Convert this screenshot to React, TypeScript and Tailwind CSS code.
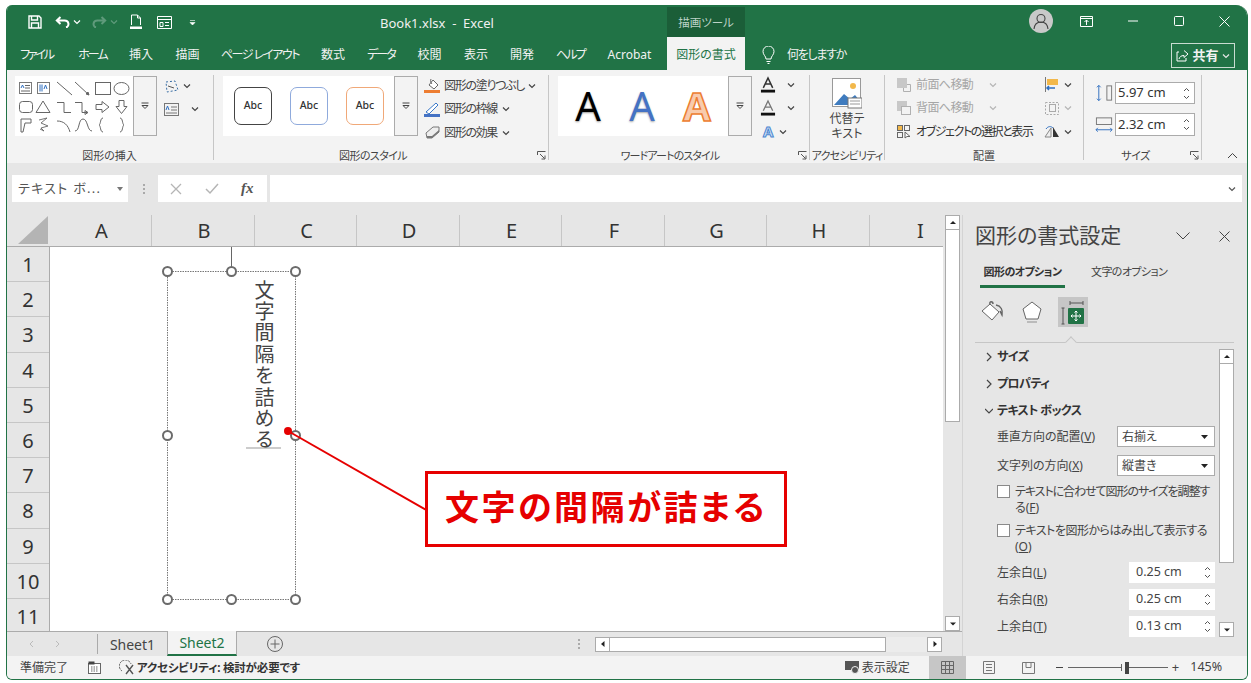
import type { ReactNode } from "react";

const TABS = [
  { label: "ファイル", w: "w-[59px] tracking-[-2.2px]" },
  { label: "ホーム", w: "w-[53px] tracking-[-2px]" },
  { label: "挿入", w: "w-[44px]" },
  { label: "描画", w: "w-[49px]" },
  { label: "ページ レイアウト", w: "w-[96px] tracking-[-1.4px]" },
  { label: "数式", w: "w-[50px]" },
  { label: "データ", w: "w-[46px] tracking-[-2px]" },
  { label: "校閲", w: "w-[51px]" },
  { label: "表示", w: "w-[42px]" },
  { label: "開発", w: "w-[50px]" },
  { label: "ヘルプ", w: "w-[47px] tracking-[-1.700px]" },
  { label: "Acrobat", w: "w-[71px]" },
];

const COLUMNS = [
  { label: "A", w: "w-[102px]" },
  { label: "B", w: "w-[103px]" },
  { label: "C", w: "w-[102px]" },
  { label: "D", w: "w-[103px]" },
  { label: "E", w: "w-[102px]" },
  { label: "F", w: "w-[103px]" },
  { label: "G", w: "w-[102px]" },
  { label: "H", w: "w-[103px]" },
  { label: "I", w: "w-[100px]" },
];

const ROWS = ["1", "2", "3", "4", "5", "6", "7", "8", "9", "10", "11"];

function Chevron({ className = "text-[#444]" }: { className?: string }) {
  return (
    <svg width="8" height="6" viewBox="0 0 8 6" className={`shrink-0 ${className}`}>
      <path d="M1 1.500 4 4.500 7 1.500" fill="none" stroke="currentColor" strokeWidth="1.200" />
    </svg>
  );
}

function GalleryButton({ className }: { className: string }) {
  return (
    <div className={`flex items-center justify-center border border-[#ababab] bg-[#f3f3f3] ${className}`}>
      <svg width="10" height="8" viewBox="0 0 10 8">
        <path d="M1.500 1h7" stroke="#444" />
        <path d="M2 3.500h6L5 6.500z" fill="none" stroke="#444" />
      </svg>
    </div>
  );
}

function Launcher() {
  return (
    <svg width="9" height="9" viewBox="0 0 9 9" className="absolute right-[2px] top-[4px]">
      <path d="M.5 4V.5H8.500M3 3l4.500 4.500M4.500 8h3.500V4.500" fill="none" stroke="#555" />
    </svg>
  );
}

function Group({
  label,
  width,
  labelClass = "",
  launcher,
  children,
}: {
  label: string;
  width: string;
  labelClass?: string;
  launcher?: boolean;
  children: ReactNode;
}) {
  return (
    <div className={`flex h-[85px] shrink-0 flex-col border-r border-[#c6c6c6] ${width}`}>
      <div className="flex h-[72px]">{children}</div>
      <div className={`relative h-[13px] whitespace-nowrap text-center text-[11px] leading-[17px] text-[#444] ${labelClass}`}>
        {label}
        {launcher && <Launcher />}
      </div>
    </div>
  );
}

function ShapeGallery() {
  return (
    <svg width="118" height="60" viewBox="0 0 118 60" className="bg-white">
      <g fill="none" stroke="#666" strokeWidth="1">
        <rect x="4.500" y="6.500" width="12" height="11" stroke="#7a7a7a" />
        <path d="M10 9.500h5M10 12h5M6 15h9" />
        <path d="M6 12l1.500-3L9 12" stroke="#2f6fc0" />
        <rect x="22.500" y="6.500" width="12" height="11" stroke="#7a7a7a" />
        <path d="M25 8.500v7M27 8.500v7M29 13l1.500-4 1.500 4" stroke="#2f6fc0" />
        <path d="M42 6 57 19M60 6l14 13" />
        <path d="M74 19l-3-1 2-2z" fill="#666" />
        <rect x="80.500" y="6.500" width="15" height="12" />
        <ellipse cx="106.500" cy="12.500" rx="7.500" ry="6" />
        <rect x="4.500" y="25.500" width="13" height="11" rx="3" />
        <path d="M28 25l7 11.500H21z" />
        <path d="M42 26.500h7v10h7M60 26.500h7v10h6M73 36.500l-3-2v4z" />
        <path d="M81 28.500h6v-3l7 5.500-7 5.500v-3h-6zM104 24.500h5v6h3l-5.500 7-5.500-7h3z" />
        <path d="M6 56V43h10v4h-6l-2 9z" />
        <path d="M24 44l8-2-6 5 7 3-7 2 3 3-4-2" strokeWidth=".9" />
        <path d="M42 45c7 0 11 4 13 11M60 55c5 0 3-12 8-12s4 12 9 12" />
        <path d="M88 42c-3 0-2 6-4 7 2 1 1 7 4 7" />
        <path d="M105 42c3 0 2 6 4 7-2 1-1 7-4 7" />
      </g>
    </svg>
  );
}

function AbcCard({ border }: { border: string }) {
  return (
    <div className={`flex size-[38px] items-center justify-center rounded-[7px] bg-white text-[10.500px] font-medium text-[#333] ${border}`}>
      Abc
    </div>
  );
}

function CommandRow({ icon, label, chevronGap }: { icon: ReactNode; label: string; chevronGap: string }) {
  return (
    <div className="flex h-[23.500px] items-center text-[12px] tracking-[-1.300px] text-[#444]">
      <span className="shrink-0">{icon}</span>
      <span className="ml-[3px] whitespace-nowrap">{label}</span>
      <Chevron className={`text-[#444] ${chevronGap}`} />
    </div>
  );
}

function FontColorIcon({ stroke }: { stroke?: boolean }) {
  return (
    <div className="flex h-[23.500px] w-[42px] items-center pl-[7px]">
      <svg width="17" height="18" viewBox="0 0 17 18">
        {stroke ? (
          <path d="M3.500 12 8.500 1.500l5 10.500M5.500 8h6" fill="none" stroke="#777" strokeWidth="1.400" />
        ) : (
          <path d="M3.500 12 8.500 1.500l5 10.500M5.500 8h6" fill="none" stroke="#333" strokeWidth="1.600" />
        )}
        <rect x="1" y="14" width="15" height="3" fill="#111" />
      </svg>
      <Chevron className="ml-[11px] text-[#444]" />
    </div>
  );
}

function Spinner({ value, className }: { value: string; className: string }) {
  return (
    <div className={`flex items-center justify-between bg-white pl-[2px] pr-[4px] ${className}`}>
      <span>{value}</span>
      <svg width="7" height="13" viewBox="0 0 7 13">
        <path d="M1 4 3.500 1.500 6 4M1 9l2.500 2.500L6 9" fill="none" stroke="#555" />
      </svg>
    </div>
  );
}

function ScrollButton({ dir, className = "" }: { dir: "up" | "down" | "left" | "right"; className?: string }) {
  const d = {
    up: "M1 5h6L4 2z",
    down: "M1 2.500h6L4 5.500z",
    left: "M5.500 1v6L2 4z",
    right: "M2.500 1v6L6 4z",
  }[dir];
  return (
    <div className={`flex size-[15px] shrink-0 items-center justify-center border border-[#ababab] bg-white ${className}`}>
      <svg width="8" height="8" viewBox="0 0 8 8">
        <path d={d} fill="#222" />
      </svg>
    </div>
  );
}

function TitleBar() {
  return (
    <div className="flex h-[32px] shrink-0 bg-[#217346] text-white">
      <div className="flex w-[373px] items-center pl-[21px] pt-[2px]">
        <svg width="14" height="14" viewBox="0 0 14 14" fill="none" stroke="#fff" strokeWidth="1.400">
          <path d="M1 1h10l2 2v10H1zM3.500 1v4h6V1M3.500 13V8h7v5" />
        </svg>
        <svg width="16" height="12" viewBox="0 0 16 12" fill="none" stroke="#fff" strokeWidth="2" className="ml-[13px]">
          <path d="M5.500 1 1.800 4.500 5.500 8M2 4.500h7.500c5 0 5 6 1.500 7" />
        </svg>
        <Chevron className="ml-[2px] text-white" />
        <svg width="16" height="12" viewBox="0 0 16 12" fill="none" stroke="#5f9a7b" strokeWidth="2" className="ml-[10px]">
          <path d="M10.500 1l3.700 3.500L10.500 8M14 4.500H6.500c-5 0-5 6-1.500 7" />
        </svg>
        <Chevron className="ml-[3px] text-[#5f9a7b]" />
        <svg width="14" height="16" viewBox="0 0 14 16" fill="none" stroke="#fff" className="ml-[11px]">
          <path d="M2.500 11V1h6l3 3v7M8.500 1v3h3" />
          <path d="M1 12.500h12v2.500H1z" fill="#fff" stroke="none" />
        </svg>
        <svg width="15" height="13" viewBox="0 0 15 13" fill="none" stroke="#fff" className="ml-[14px]">
          <path d="M.5.5h14v12H.5zM.5 3.500h14M3 6.500h3v4H3zM8 6.500h4M8 9.500h4" />
        </svg>
        <svg width="7" height="7" viewBox="0 0 7 7" className="ml-[17px]">
          <path d="M1 1.500h5M1 3.500h5L3.500 6z" fill="#fff" stroke="#fff" strokeWidth=".6" />
        </svg>
      </div>
      <div className="flex w-[287px] items-center pt-[6px] text-[13px] text-[#f0f0f0]">Book1.xlsx&nbsp; -&nbsp; Excel</div>
      <div className="mt-[2px] flex w-[78px] items-center justify-center pt-[2px] bg-[#1b5e38] text-[11.500px] text-[#bdd3c7]">
        描画ツール
      </div>
      <div className="flex flex-1 items-center">
        <div className="ml-[284px] flex size-[24px] items-center justify-center rounded-full bg-[#c9c9c9]">
          <svg width="16" height="17" viewBox="0 0 16 17" fill="none" stroke="#444" strokeWidth="1.100">
            <circle cx="8" cy="5.500" r="4" />
            <path d="M1 16c.5-5 3.500-7 7-7s6.500 2 7 7" />
          </svg>
        </div>
        <svg width="13" height="11" viewBox="0 0 13 11" fill="none" stroke="#fff" className="ml-[27px]">
          <path d="M.5.5h12v10H.5zM.5 2.500h12M6.500 9V4M4.500 6l2-2 2 2" />
        </svg>
        <svg width="12" height="2" viewBox="0 0 12 2" className="ml-[34px]">
          <path d="M1 1h10" stroke="#fff" />
        </svg>
        <svg width="10" height="10" viewBox="0 0 10 10" fill="none" stroke="#fff" className="ml-[35px]">
          <rect x=".5" y=".5" width="9" height="9" rx="1" />
        </svg>
        <svg width="11" height="11" viewBox="0 0 11 11" fill="none" stroke="#fff" className="ml-[35px]">
          <path d="M.5.5l10 10M10.500.5l-10 10" />
        </svg>
      </div>
    </div>
  );
}

function TabRow() {
  return (
    <div className="flex h-[33px] shrink-0 bg-[#217346] text-[12px] text-[#f2f2f2]">
      {TABS.map((t) => (
        <div key={t.label} className={`flex items-center justify-center whitespace-nowrap pt-[3px] ${t.w}`}>
          {t.label}
        </div>
      ))}
      <div className="ml-[2px] flex w-[78px] items-center justify-center bg-[#f3f3f3] pt-[3px] text-[#217346]">図形の書式</div>
      <svg width="13" height="18" viewBox="0 0 13 18" fill="none" stroke="#fff" className="ml-[17px] mt-[3px] self-center">
        <path d="M4 13c0-3-3-4-3-7.500a5.500 5.500 0 0 1 11 0C12 9 9 10 9 13zM4.500 15.500h4M5.500 17.500h2" />
      </svg>
      <div className="ml-[12px] flex w-[58px] items-center whitespace-nowrap pt-[3px] tracking-[-1.300px]">何をしますか</div>
      <div className="ml-[326px] mt-[6px] flex h-[25px] w-[64px] items-center justify-center gap-[3px] border border-[#c9dcd1] font-bold">
        <svg width="13" height="13" viewBox="0 0 13 13" fill="none" stroke="#fff">
          <path d="M8 1.500 12 5l-4 3.500V6.500C5 6.500 3.500 8 3 10M3 3H1v9h9V9" />
        </svg>
        <span className="text-[13px]">共有</span>
        <Chevron className="text-[#e6e6e6]" />
      </div>
    </div>
  );
}

function Ribbon() {
  return (
    <div className="flex h-[93px] shrink-0 bg-[#f3f3f3] pt-[5px]">
      <Group label="図形の挿入" width="w-[207px]" labelClass="text-[11.500px] pr-[1px]">
        <div className="ml-[8px] mt-[1px] flex h-[60px] w-[142px]">
          <ShapeGallery />
          <GalleryButton className="w-[24px]" />
        </div>
        <div className="ml-[7px] flex flex-col">
          <div className="flex h-[22px] items-center">
            <svg width="15" height="13" viewBox="0 0 15 13" fill="none">
              <path d="M2 2 11 1l3 9-11 2z" stroke="#3a6ea5" strokeDasharray="2 2" />
              <path d="M4 6l6 2" stroke="#555" />
            </svg>
            <Chevron className="ml-[4px] text-[#444]" />
          </div>
          <div className="mt-[1px] flex h-[22px] items-center">
            <svg width="15" height="13" viewBox="0 0 15 13" fill="none" stroke="#777">
              <rect x=".5" y=".5" width="14" height="12" />
              <path d="M7 4h6M7 7h6M2 10h11" />
              <path d="M2 7l1.500-4L5 7" stroke="#2f6fc0" />
            </svg>
            <Chevron className="ml-[12px] text-[#444]" />
          </div>
        </div>
      </Group>

      <Group label="図形のスタイル" width="w-[335px]" labelClass="tracking-[-.6px] pr-[16px]" launcher>
        <div className="ml-[9px] mt-[1px] flex h-[60px] w-[195px]">
          <div className="flex w-[171px] items-center gap-[18px] bg-white pl-[11px]">
            <AbcCard border="border-[1.500px] border-[#444]" />
            <AbcCard border="border-[1.500px] border-[#8faadc]" />
            <AbcCard border="border-[1.500px] border-[#f0a878]" />
          </div>
          <GalleryButton className="w-[24px]" />
        </div>
        <div className="-mt-[1px] ml-[6px] flex flex-col">
          <CommandRow
            chevronGap="ml-[4px]"
            label="図形の塗りつぶし"
            icon={
              <svg width="17" height="17" viewBox="0 0 17 17" fill="none">
                <path d="M5 8l4-5 5 5-4 4z" stroke="#666" fill="#fff" />
                <path d="M7 2c-1 2 0 4 1 5" stroke="#666" />
                <rect x="0" y="13" width="16" height="3" fill="#ed7d31" />
              </svg>
            }
          />
          <CommandRow
            chevronGap="ml-[5px]"
            label="図形の枠線"
            icon={
              <svg width="17" height="17" viewBox="0 0 17 17" fill="none">
                <path d="M2 11 12 2l2 2-9 9z" fill="#fff" stroke="#3a78c8" />
                <rect x="0" y="13" width="16" height="3" fill="#4472c4" />
              </svg>
            }
          />
          <CommandRow
            chevronGap="ml-[5px]"
            label="図形の効果"
            icon={
              <svg width="17" height="17" viewBox="0 0 17 17">
                <path d="M2 9 9 3h6v5l-7 6H3z" fill="#eee" stroke="#777" />
                <path d="M3 14h5l7-6v-2l-7 6H3z" fill="#777" />
              </svg>
            }
          />
        </div>
      </Group>

      <Group label="ワードアートのスタイル" width="w-[261px]" labelClass="tracking-[-.9px] pr-[18px]" launcher>
        <div className="ml-[9px] mt-[1px] flex h-[60px] w-[194px]">
          <div className="flex w-[170px] items-center justify-around bg-white px-[3px] text-[40px] leading-none">
            <span className="text-black [text-shadow:0_1px_2px_#999]">A</span>
            <span className="text-[#4472c4] [text-shadow:0_1px_2px_#aaa]">A</span>
            <span className="font-bold text-[#f8cbad] [-webkit-text-stroke:1.500px_#ed7d31]">A</span>
          </div>
          <GalleryButton className="w-[24px]" />
        </div>
        <div className="-mt-[2px] ml-[1px] flex flex-col">
          <FontColorIcon />
          <FontColorIcon stroke />
          <div className="flex h-[23.500px] items-center pl-[10px]">
            <span className="text-[15px] font-bold leading-none text-[#cfe0f5] [-webkit-text-stroke:1px_#4a86d0]">A</span>
            <Chevron className="ml-[6px] text-[#444]" />
          </div>
        </div>
      </Group>

      <Group label="アクセシビリティ" width="w-[75px]" labelClass="tracking-[-.8px]">
        <div className="flex w-full flex-col items-center pt-[3px] text-[12px] leading-[15px] text-[#444]">
          <svg width="30" height="31" viewBox="0 0 30 31">
            <rect x=".5" y=".5" width="28" height="28" fill="#fff" stroke="#999" />
            <circle cx="21" cy="8" r="3" fill="#f2b84b" />
            <path d="M2 27l10-11 6 5 5-4 5 6v4H2z" fill="#3f7cbf" />
            <rect x="16" y="20" width="14" height="10" fill="#fff" stroke="#777" />
            <path d="M18 23h10M18 26h10" stroke="#999" />
          </svg>
          <div className="mt-[2px] text-center">
            代替テ
            <br />
            キスト
          </div>
        </div>
      </Group>

      <Group label="配置" width="w-[199px]">
        <div className="-mt-[2px] flex w-[150px] flex-col pl-[12px] text-[12px]">
          <div className="flex h-[23.500px] items-center text-[#a6a6a6]">
            <svg width="14" height="14" viewBox="0 0 14 14" className="shrink-0">
              <rect x="0" y="0" width="10" height="10" fill="#c8c8c8" />
              <path d="M10 6.500h3.500v7h-7V10" fill="none" stroke="#b0b0b0" />
            </svg>
            <span className="ml-[5px] tracking-[-.6px]">前面へ移動</span>
            <Chevron className="ml-[16px] text-[#b5b5b5]" />
          </div>
          <div className="flex h-[23.500px] items-center text-[#a6a6a6]">
            <svg width="14" height="14" viewBox="0 0 14 14" className="shrink-0">
              <rect x="0" y="0" width="10" height="10" fill="#c8c8c8" />
              <rect x="4.500" y="5.500" width="9" height="8" fill="#f3f3f3" stroke="#b0b0b0" />
            </svg>
            <span className="ml-[5px] tracking-[-.6px]">背面へ移動</span>
            <Chevron className="ml-[16px] text-[#b5b5b5]" />
          </div>
          <div className="flex h-[23.500px] items-center whitespace-nowrap text-[#333]">
            <svg width="14" height="14" viewBox="0 0 14 14" fill="none" stroke="#666" className="shrink-0">
              <rect x=".5" y=".5" width="5" height="5" fill="#f2b84b" />
              <rect x="7.500" y=".5" width="5" height="5" />
              <rect x=".5" y="7.500" width="5" height="5" />
              <path d="M8 7v6l2-1.500h3z" fill="#fff" />
            </svg>
            <span className="ml-[5px] tracking-[-1.400px]">オブジェクトの選択と表示</span>
          </div>
        </div>
        <div className="-mt-[2px] ml-[9px] flex flex-col">
          <div className="flex h-[23.500px] items-center">
            <svg width="16" height="15" viewBox="0 0 16 15">
              <path d="M1.500 0v15" stroke="#777" />
              <rect x="3" y="2" width="11" height="6" fill="#f2b84b" />
              <path d="M3 11h8M5 9l-2 2 2 2" fill="none" stroke="#2f6fc0" strokeWidth="1.500" />
            </svg>
            <Chevron className="ml-[4px] text-[#444]" />
          </div>
          <div className="flex h-[23.500px] items-center">
            <svg width="16" height="15" viewBox="0 0 16 15" fill="none" stroke="#aaa">
              <rect x="1.500" y="1.500" width="13" height="12" strokeDasharray="2 1.500" />
              <rect x="5.500" y="3.500" width="6" height="7" />
            </svg>
            <Chevron className="ml-[4px] text-[#b5b5b5]" />
          </div>
          <div className="flex h-[23.500px] items-center">
            <svg width="16" height="15" viewBox="0 0 16 15">
              <path d="M1 13 7 4v9z" fill="#eee" stroke="#888" />
              <path d="M9 13V3l6 10z" fill="#333" />
              <path d="M2 5c2-3 5-3 7-1" fill="none" stroke="#2f6fc0" />
            </svg>
            <Chevron className="ml-[4px] text-[#444]" />
          </div>
        </div>
      </Group>

      <Group label="サイズ" width="w-[118px]" labelClass="pr-[14px] tracking-[-.4px]" launcher>
        <div className="flex flex-col pl-[11px] pt-[7px] text-[13px] text-[#333]">
          <div className="flex items-center">
            <svg width="19" height="18" viewBox="0 0 20 18" fill="none">
              <path d="M4 1v16M2 3l2-2 2 2M2 15l2 2 2-2" stroke="#2f6fc0" />
              <rect x="12.500" y="1.500" width="5" height="15" stroke="#777" />
            </svg>
            <Spinner value="5.97 cm" className="ml-px h-[22px] w-[80px] border border-[#ababab]" />
          </div>
          <div className="mt-[9px] flex items-center">
            <svg width="19" height="18" viewBox="0 0 20 18" fill="none">
              <rect x="1.500" y="1.500" width="16" height="7" stroke="#777" />
              <path d="M1 14h17M3 12l-2 2 2 2M16 12l2 2-2 2" stroke="#2f6fc0" />
            </svg>
            <Spinner value="2.32 cm" className="ml-px h-[23px] w-[80px] border border-[#ababab]" />
          </div>
        </div>
      </Group>

      <div className="flex flex-1 items-end justify-center pb-[4px] pl-[16px]">
        <svg width="11" height="7" viewBox="0 0 11 7">
          <path d="M1 6l4.500-4.500L10 6" fill="none" stroke="#444" />
        </svg>
      </div>
    </div>
  );
}

function FormulaBar() {
  return (
    <div className="flex h-[52px] shrink-0 items-start bg-[#e6e6e6] pl-[5px] pr-[5px] pt-[12px]">
      <div className="flex h-[27px] w-[116px] items-center justify-between whitespace-nowrap bg-white pl-[6px] pr-[5px] text-[13px] tracking-[1.300px] text-[#555]">
        テキスト ボ...
        <svg width="6" height="4" viewBox="0 0 6 4" className="shrink-0">
          <path d="M0 0h6L3 4z" fill="#777" />
        </svg>
      </div>
      <div className="ml-[14px] flex h-[27px] w-[3px] flex-col items-center justify-center gap-[2px]">
        <span className="size-[2px] bg-[#aaa]" />
        <span className="size-[2px] bg-[#aaa]" />
        <span className="size-[2px] bg-[#aaa]" />
      </div>
      <div className="ml-[13px] flex h-[27px] w-[109px] items-center bg-white pl-[12px] text-[#aaa]">
        <svg width="12" height="12" viewBox="0 0 12 12" fill="none" stroke="#b5b5b5" strokeWidth="1.300">
          <path d="M1 1l10 10M11 1 1 11" />
        </svg>
        <svg width="14" height="12" viewBox="0 0 14 12" fill="none" stroke="#b5b5b5" strokeWidth="1.500" className="ml-[23px]">
          <path d="M1 6l4 4 8-9" />
        </svg>
        <span className="ml-[22px] font-['Liberation_Serif',serif] text-[15px] font-bold italic text-[#555]">fx</span>
      </div>
      <div className="ml-[3px] flex h-[27px] flex-1 items-center justify-end bg-white pr-[6px]">
        <Chevron className="text-[#555]" />
      </div>
    </div>
  );
}

function SheetCanvas() {
  const handle = "absolute size-[11px] rounded-full border-2 border-[#6b6b6b] bg-white";
  return (
    <div className="relative flex-1 bg-white">
      <svg className="absolute inset-0" width="893" height="384" viewBox="0 0 893 384">
        <path d="M181.500 0v24" stroke="#666" />
        <rect x="117.500" y="24.500" width="128" height="328" fill="none" stroke="#777" strokeDasharray="1.500 1" />
        <path d="M196 201h35" stroke="#bbb" strokeWidth="1.500" />
      </svg>
      <div className="absolute left-[203px] top-[33px] h-[180px] whitespace-nowrap text-[20px] leading-[20px] tracking-[1.400px] text-[#444] [writing-mode:vertical-rl]">
        文字間隔を詰める
      </div>
      <span className={`${handle} left-[112px] top-[19px]`} />
      <span className={`${handle} left-[176px] top-[19px]`} />
      <span className={`${handle} left-[240px] top-[19px]`} />
      <span className={`${handle} left-[112px] top-[183px]`} />
      <span className={`${handle} left-[240px] top-[183px]`} />
      <span className={`${handle} left-[112px] top-[347px]`} />
      <span className={`${handle} left-[176px] top-[347px]`} />
      <span className={`${handle} left-[240px] top-[347px]`} />
      <svg className="absolute inset-0" width="893" height="384" viewBox="0 0 893 384">
        <circle cx="238" cy="184" r="4" fill="#e60000" />
        <path d="M238 184 378 264" stroke="#e60000" strokeWidth="2" />
      </svg>
      <div className="absolute left-[375px] top-[224px] flex h-[76px] w-[362px] items-center justify-center whitespace-nowrap border-[3px] border-[#e60000] bg-white pb-[3px] text-[34px] font-bold tracking-[2.500px] text-[#e60000]">
        文字の間隔が詰まる
      </div>
    </div>
  );
}

function SheetArea() {
  return (
    <div className="flex w-[955px] shrink-0 flex-col">
      <div className="flex min-h-0 flex-1">
        <div className="flex w-[936px] shrink-0 flex-col">
          <div className="flex h-[32px] shrink-0 border-b border-[#ababab] bg-[#e6e6e6] text-[#333]">
            <div className="flex w-[43px] shrink-0 items-end justify-end pb-[2px] pr-[2px]">
              <svg width="30" height="28" viewBox="0 0 30 28">
                <path d="M30 0v28H0z" fill="#b4b4b4" />
              </svg>
            </div>
            <div className="flex min-w-0 flex-1 overflow-hidden">
              {COLUMNS.map((c) => (
                <div key={c.label} className={`flex shrink-0 items-center justify-center border-r border-[#c6c6c6] pl-[2px] text-[20px] ${c.w}`}>
                  {c.label}
                </div>
              ))}
            </div>
          </div>
          <div className="flex min-h-0 flex-1">
            <div className="w-[43px] shrink-0 overflow-hidden border-r border-[#ababab] bg-[#e6e6e6] text-[20px] text-[#333]">
              {ROWS.map((r) => (
                <div key={r} className="flex h-[35.200px] items-center justify-center border-b border-[#c6c6c6] pt-[2px]">
                  {r}
                </div>
              ))}
            </div>
            <SheetCanvas />
          </div>
        </div>
        <div className="flex flex-1 flex-col pl-[2px] pr-[2px]">
          <ScrollButton dir="up" />
          <div className="h-[192px] w-[15px] border-x border-b border-[#ababab] bg-white" />
          <div className="flex-1" />
          <ScrollButton dir="down" />
        </div>
      </div>
      <div className="flex h-[25px] shrink-0 border-t border-[#ababab] bg-[#e6e6e6] text-[14px]">
        <div className="flex w-[90px] items-center pl-[22px]">
          <svg width="5" height="8" viewBox="0 0 5 8"><path d="M4 1 1 4l3 3" fill="none" stroke="#bbb" /></svg>
          <svg width="5" height="8" viewBox="0 0 5 8" className="ml-[21px]"><path d="M1 1l3 3-3 3" fill="none" stroke="#bbb" /></svg>
        </div>
        <div className="my-[2px] w-px bg-[#aaa]" />
        <div className="flex w-[69px] items-center justify-center text-[#444]">Sheet1</div>
        <div className="-mt-px flex w-[70px] items-center justify-center border-x border-b-2 border-x-[#ababab] border-b-[#217346] bg-[#f3f3f3] text-[#217346]">
          Sheet2
        </div>
        <svg width="16" height="16" viewBox="0 0 16 16" fill="none" stroke="#666" className="ml-[30px] self-center">
          <circle cx="8" cy="8" r="7.500" />
          <path d="M8 3.500v9M3.500 8h9" />
        </svg>
        <div className="ml-[295px] flex flex-col justify-center gap-[2px]">
          <span className="size-[2px] bg-[#aaa]" />
          <span className="size-[2px] bg-[#aaa]" />
          <span className="size-[2px] bg-[#aaa]" />
        </div>
        <div className="ml-[15px] flex items-center">
          <ScrollButton dir="left" />
          <div className="h-[15px] w-[276px] border-y border-r border-[#ababab] bg-white" />
          <div className="h-[15px] w-[41px] bg-[#ececec]" />
          <ScrollButton dir="right" />
        </div>
      </div>
    </div>
  );
}

function PaneSection({ label, open }: { label: string; open?: boolean }) {
  return (
    <div className="flex h-[27px] items-center pl-[10px] text-[12px] font-bold tracking-[-.6px] text-[#333]">
      <svg width="8" height="10" viewBox="0 0 8 10" fill="none" stroke="#444" strokeWidth="1.200">
        {open ? <path d="M0 3l4 4 4-4" /> : <path d="M2 1l4 4-4 4" />}
      </svg>
      <span className="ml-[4px]">{label}</span>
    </div>
  );
}

function SelectRow({ label, value, className }: { label: ReactNode; value: string; className: string }) {
  return (
    <div className={`flex h-[21px] items-center justify-between text-[12px] text-[#444] ${className}`}>
      <span>{label}</span>
      <div className="flex h-[21px] w-[98px] items-center justify-between border border-[#ababab] bg-white pl-[4px] pr-[6px]">
        {value}
        <svg width="7" height="4" viewBox="0 0 7 4"><path d="M0 0h7L3.500 4z" fill="#222" /></svg>
      </div>
    </div>
  );
}

function MarginRow({ label, value, className }: { label: ReactNode; value: string; className: string }) {
  return (
    <div className={`flex h-[21px] items-center justify-between text-[12px] text-[#444] ${className}`}>
      <span>{label}</span>
      <Spinner value={value} className="h-[21px] w-[86px] !pl-[7px] text-[12.500px]" />
    </div>
  );
}

function FormatPane() {
  return (
    <div className="flex w-[285px] shrink-0 flex-col border-l border-[#d4d4d4] bg-[#e6e6e6] pl-[12px]">
      <div className="flex h-[42px] shrink-0 items-center text-[21px] text-[#444]">
        <span>図形の書式設定</span>
        <svg width="14" height="8" viewBox="0 0 14 8" fill="none" stroke="#444" className="ml-[55px]">
          <path d="M.5.5l6.500 6.500L13.500.5" />
        </svg>
        <svg width="11" height="11" viewBox="0 0 11 11" fill="none" stroke="#444" className="ml-[29px]">
          <path d="M.5.5l10 10M10.500.5l-10 10" />
        </svg>
      </div>
      <div className="flex h-[31px] shrink-0 whitespace-nowrap text-[11px] tracking-[-.6px] text-[#444]">
        <div className="ml-[5px] flex w-[85px] items-start justify-center border-b-[3px] border-[#217346] pt-[7px] font-bold text-[#333]">
          図形のオプション
        </div>
        <div className="ml-[26px] pt-[7px]">文字のオプション</div>
      </div>
      <div className="mt-[9px] flex h-[30px] shrink-0 items-center">
        <svg width="24" height="22" viewBox="0 0 24 22" className="ml-[6px]">
          <path d="M1 10 9 3l9 8-7 8z" fill="#fff" stroke="#666" />
          <path d="M9 3c-1-3 3-3 3 0M15 4c5 1 7 5 6 10l-2-4" fill="none" stroke="#666" strokeWidth="1.500" />
        </svg>
        <svg width="20" height="22" viewBox="0 0 20 22" fill="#fff" stroke="#666" className="ml-[17px]">
          <path d="M10 1l9 7-3 10H4L1 8z" />
          <path d="M5 21h10" stroke="#bbb" strokeWidth="2" />
        </svg>
        <div className="ml-[16px] flex h-[30px] w-[30px] items-center justify-center bg-[#c6c6c6]">
          <svg width="24" height="25" viewBox="0 0 24 25">
            <path d="M9 3h13M9 1v4M22 1v4M2 8v16M.5 8h3M.5 24h3" fill="none" stroke="#555" />
            <rect x="7" y="8" width="16" height="16" rx="1" fill="#217346" />
            <path d="M15 11v10M10 16h10M13.500 12.500 15 11l1.500 1.500M13.500 19.500 15 21l1.500-1.500M11.500 14.500 10 16l1.500 1.500M18.500 14.500 20 16l-1.500 1.500" fill="none" stroke="#fff" />
          </svg>
        </div>
      </div>
      <div className="relative mt-[15px] h-px w-[259px] shrink-0 bg-[#c6c6c6]">
        <span className="absolute left-[92px] top-[-4px] size-[8px] rotate-45 border-l border-t border-[#c6c6c6] bg-[#e6e6e6]" />
      </div>
      <div className="flex min-h-0 flex-1">
        <div className="w-[244px] shrink-0 pr-[4px]">
          <PaneSection label="サイズ" />
          <PaneSection label="プロパティ" />
          <PaneSection label="テキスト ボックス" open />
          <div className="pl-[22px]">
            <SelectRow
              className="mt-[2px]"
              value="右揃え"
              label={<>垂直方向の配置(<span className="underline">V</span>)</>}
            />
            <SelectRow
              className="mt-[8px]"
              value="縦書き"
              label={<>文字列の方向(<span className="underline">X</span>)</>}
            />
            <div className="mt-[8px] flex whitespace-nowrap text-[12px] leading-[15.500px] text-[#444]">
              <span className="mr-[5px] mt-[1px] size-[13px] shrink-0 border border-[#8a8a8a] bg-white" />
              <span>
                <span className="tracking-[-1.050px]">テキストに合わせて図形のサイズを調整す</span>
                <br />
                る(<span className="underline">F</span>)
              </span>
            </div>
            <div className="mt-[8px] flex whitespace-nowrap text-[12px] leading-[15.500px] text-[#444]">
              <span className="mr-[5px] mt-[1px] size-[13px] shrink-0 border border-[#8a8a8a] bg-white" />
              <span>
                <span className="tracking-[-.5px]">テキストを図形からはみ出して表示する</span>
                <br />
                (<span className="underline">O</span>)
              </span>
            </div>
            <MarginRow className="mt-[8px]" value="0.25 cm" label={<>左余白(<span className="underline">L</span>)</>} />
            <MarginRow className="mt-[6px]" value="0.25 cm" label={<>右余白(<span className="underline">R</span>)</>} />
            <MarginRow className="mt-[6px]" value="0.13 cm" label={<>上余白(<span className="underline">T</span>)</>} />
          </div>
        </div>
        <div className="mt-[6px] flex h-[288px] w-[15px] flex-col">
          <ScrollButton dir="up" />
          <div className="h-[199px] border-x border-b border-[#ababab] bg-white" />
          <div className="flex-1" />
          <ScrollButton dir="down" />
        </div>
      </div>
    </div>
  );
}

function StatusBar() {
  return (
    <div className="flex h-[23px] shrink-0 items-center bg-[#f3f3f3] text-[12px] text-[#444]">
      <span className="ml-[13px]">準備完了</span>
      <svg width="13" height="13" viewBox="0 0 13 13" className="ml-[20px]">
        <rect x=".5" y="2.500" width="12" height="10" fill="#fff" stroke="#666" />
        <path d="M.5 .5h6v3h-6z" fill="#444" />
        <path d="M3 6h7M3 8h7M3 10h7" stroke="#666" strokeDasharray="1.500 1" />
      </svg>
      <svg width="17" height="15" viewBox="0 0 17 15" fill="none" stroke="#555" className="ml-[18px]">
        <path d="M3 11A6 6 0 1 1 12 4" strokeDasharray="2 1" />
        <path d="M7 5l7 9M14 5l-7 9" strokeWidth="1.400" />
      </svg>
      <span className="ml-px whitespace-nowrap text-[11.500px] font-bold tracking-[-.2px] text-[#333]">アクセシビリティ: 検討が必要です</span>
      <svg width="16" height="13" viewBox="0 0 16 13" className="ml-[545px]">
        <rect x="0" y="0" width="14" height="9" fill="#555" />
        <circle cx="10" cy="9" r="3.500" fill="#555" stroke="#f3f3f3" />
      </svg>
      <span className="ml-[1px] whitespace-nowrap">表示設定</span>
      <div className="ml-[19px] flex h-full w-[37px] items-center justify-center bg-[#c6c6c6]">
        <svg width="13" height="13" viewBox="0 0 13 13" fill="none" stroke="#666">
          <path d="M.5.5h12v12H.5zM.5 4.500h12M.5 8.500h12M4.500.5v12M8.500.5v12" />
        </svg>
      </div>
      <svg width="12" height="13" viewBox="0 0 12 13" fill="none" stroke="#777" className="ml-[17px]">
        <path d="M.5.5h11v12H.5zM3 3.500h6M3 6.500h6M3 9.500h6" />
      </svg>
      <svg width="13" height="12" viewBox="0 0 13 12" fill="none" stroke="#777" className="ml-[27px]">
        <path d="M.5.5h12v11H.5zM4 .5v5h5v-5" />
      </svg>
      <span className="ml-[21px] h-px w-[7px] bg-[#444]" />
      <div className="ml-[5px] flex h-[13px] w-[100px] items-center">
        <span className="h-px w-[53px] bg-[#666]" />
        <span className="h-[7px] w-px bg-[#666]" />
        <span className="ml-[3px] h-[12px] w-[4px] bg-[#444]" />
        <span className="h-px flex-1 bg-[#666]" />
      </div>
      <span className="ml-[4px] text-[13px] leading-none">+</span>
      <span className="ml-[11px] text-[12.500px]">145%</span>
    </div>
  );
}

export default function App() {
  return (
    <div className="h-[683px] w-[1251px] overflow-hidden bg-white pb-[3px] pl-[6px] pt-[5px] font-['Noto_Sans','Noto_Sans_CJK_JP',sans-serif] [font-feature-settings:'palt']">
      <div className="flex h-full w-[1242px] flex-col overflow-hidden rounded-b-[6px] rounded-tl-[6px] rounded-tr-[12px] border-x border-b border-[#217346] bg-[#e6e6e6]">
        <TitleBar />
        <TabRow />
        <Ribbon />
        <FormulaBar />
        <div className="flex h-[441px] shrink-0">
          <SheetArea />
          <FormatPane />
        </div>
        <StatusBar />
      </div>
    </div>
  );
}
